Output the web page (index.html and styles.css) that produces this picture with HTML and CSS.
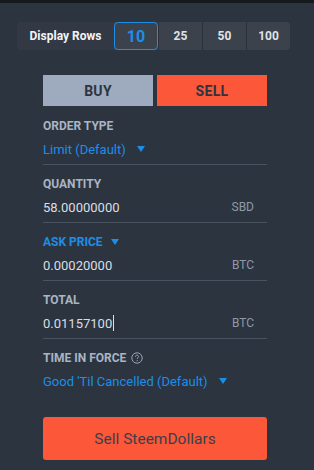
FILE: index.html
```html
<!DOCTYPE html>
<html lang="en">
  <head>
    <meta charset="UTF-8" />
    <meta name="viewport" content="width=device-width, initial-scale=1.0" />
    <title>Sell SteemDollars</title>
    <link rel="stylesheet" href="styles.css">
  </head>
  <body>
    <div class="topbar"></div>
    <main>
      <div class="rows">
        <span class="rows-label">Display Rows</span>
        <button class="rows-btn active">10</button>
        <button class="rows-btn">25</button>
        <button class="rows-btn">50</button>
        <button class="rows-btn">100</button>
      </div>

      <div class="panel">
        <div class="tabs">
          <button class="tab buy">BUY</button>
          <button class="tab sell">SELL</button>
        </div>

        <div class="field">
          <div class="label">ORDER TYPE</div>
          <div class="value select">Limit (Default) <span class="caret"></span></div>
        </div>

        <div class="field">
          <div class="label">QUANTITY</div>
          <div class="value">58.00000000 <span class="unit">SBD</span></div>
        </div>

        <div class="field">
          <div class="label blue">ASK PRICE <span class="caret"></span></div>
          <div class="value">0.00020000 <span class="unit">BTC</span></div>
        </div>

        <div class="field">
          <div class="label">TOTAL</div>
          <div class="value"><span>0.01157100<span class="cursor"></span></span> <span class="unit">BTC</span></div>
        </div>

        <div class="field last">
          <div class="label">TIME IN FORCE
            <svg class="help" width="12" height="12" viewBox="0 0 12 12">
              <circle cx="6" cy="6" r="5.2" fill="none" stroke="#9aa4b1" stroke-width="1"/>
              <path d="M4.4 4.7 C4.4 3.7 5.1 3.2 6 3.2 C6.9 3.2 7.6 3.8 7.6 4.6 C7.6 5.6 6.2 5.7 6.2 6.9" fill="none" stroke="#9aa4b1" stroke-width="1"/>
              <circle cx="6.2" cy="8.7" r="0.6" fill="#9aa4b1"/>
            </svg>
          </div>
          <div class="value select">Good 'Til Cancelled (Default) <span class="caret"></span></div>
        </div>

        <button class="submit">Sell SteemDollars</button>
      </div>
    </main>
  </body>
</html>
```

FILE: styles.css
```css
body {
  margin: 0;
  background-color: #2c3440;
  font-family: Roboto, "Liberation Sans", sans-serif;
}

.topbar {
  height: 3px;
  background-color: #16191d;
}

main {
  padding: 19px 0 0 17px;
}

.rows {
  display: flex;
  width: 273px;
  height: 28px;
  background-color: #3a414b;
  border-radius: 4px;
}

.rows-label {
  width: 97px;
  display: flex;
  align-items: center;
  justify-content: center;
  color: #f2f4f7;
  font-size: 12px;
  font-weight: bold;
  background-color: #323944;
  border-radius: 4px 0 0 4px;
}

.rows-btn {
  flex: 1;
  border: none;
  border-left: 1px solid #2c323b;
  background-color: #3b424c;
  color: #dfe3e8;
  font-family: inherit;
  font-size: 12px;
  font-weight: bold;
  padding: 0;
}

.rows-btn:last-child {
  border-radius: 0 4px 4px 0;
}

.rows-btn.active {
  flex: 0 0 44px;
  border: 1px solid #1b8fe8;
  border-radius: 4px;
  color: #1b8fe8;
  font-size: 16px;
}

.panel {
  width: 224px;
  margin: 25px 0 0 26px;
}

.tabs {
  display: flex;
  gap: 4px;
  margin-bottom: 1px;
}

.tab {
  flex: 1;
  height: 31px;
  border: none;
  font-family: inherit;
  font-size: 14px;
  font-weight: bold;
  color: #2c3440;
  letter-spacing: 0.3px;
}

.buy {
  background-color: #9eabbf;
}

.sell {
  background-color: #fc5738;
}

.field {
  padding: 11px 0 4px;
  border-bottom: 1px solid #4b5361;
}

.field.last {
  border-bottom: none;
}

.label {
  height: 16px;
  line-height: 16px;
  display: flex;
  align-items: center;
  gap: 8px;
  color: #a9b4c4;
  font-size: 12px;
  font-weight: bold;
}

.label.blue {
  color: #1b8fe8;
}

.help {
  margin-left: -3px;
}

.value {
  margin-top: 4px;
  height: 22px;
  display: flex;
  align-items: center;
  justify-content: space-between;
  padding-right: 13px;
  color: #d9dee4;
  font-size: 13px;
}

.value.select {
  justify-content: flex-start;
  gap: 11px;
  color: #1b8fe8;
}

.unit {
  color: #8f99a6;
  font-size: 12px;
}

.caret {
  width: 0;
  height: 0;
  border-left: 4px solid transparent;
  border-right: 4px solid transparent;
  border-top: 6px solid #1b8fe8;
}

.cursor {
  display: inline-block;
  width: 1px;
  height: 16px;
  margin-left: 1px;
  vertical-align: -3px;
  background-color: #d9dee4;
}

.submit {
  width: 224px;
  height: 43px;
  margin-top: 21px;
  border: none;
  border-radius: 3px;
  background-color: #fc5738;
  color: #3a3f4a;
  font-family: inherit;
  font-size: 15.5px;
}
```
